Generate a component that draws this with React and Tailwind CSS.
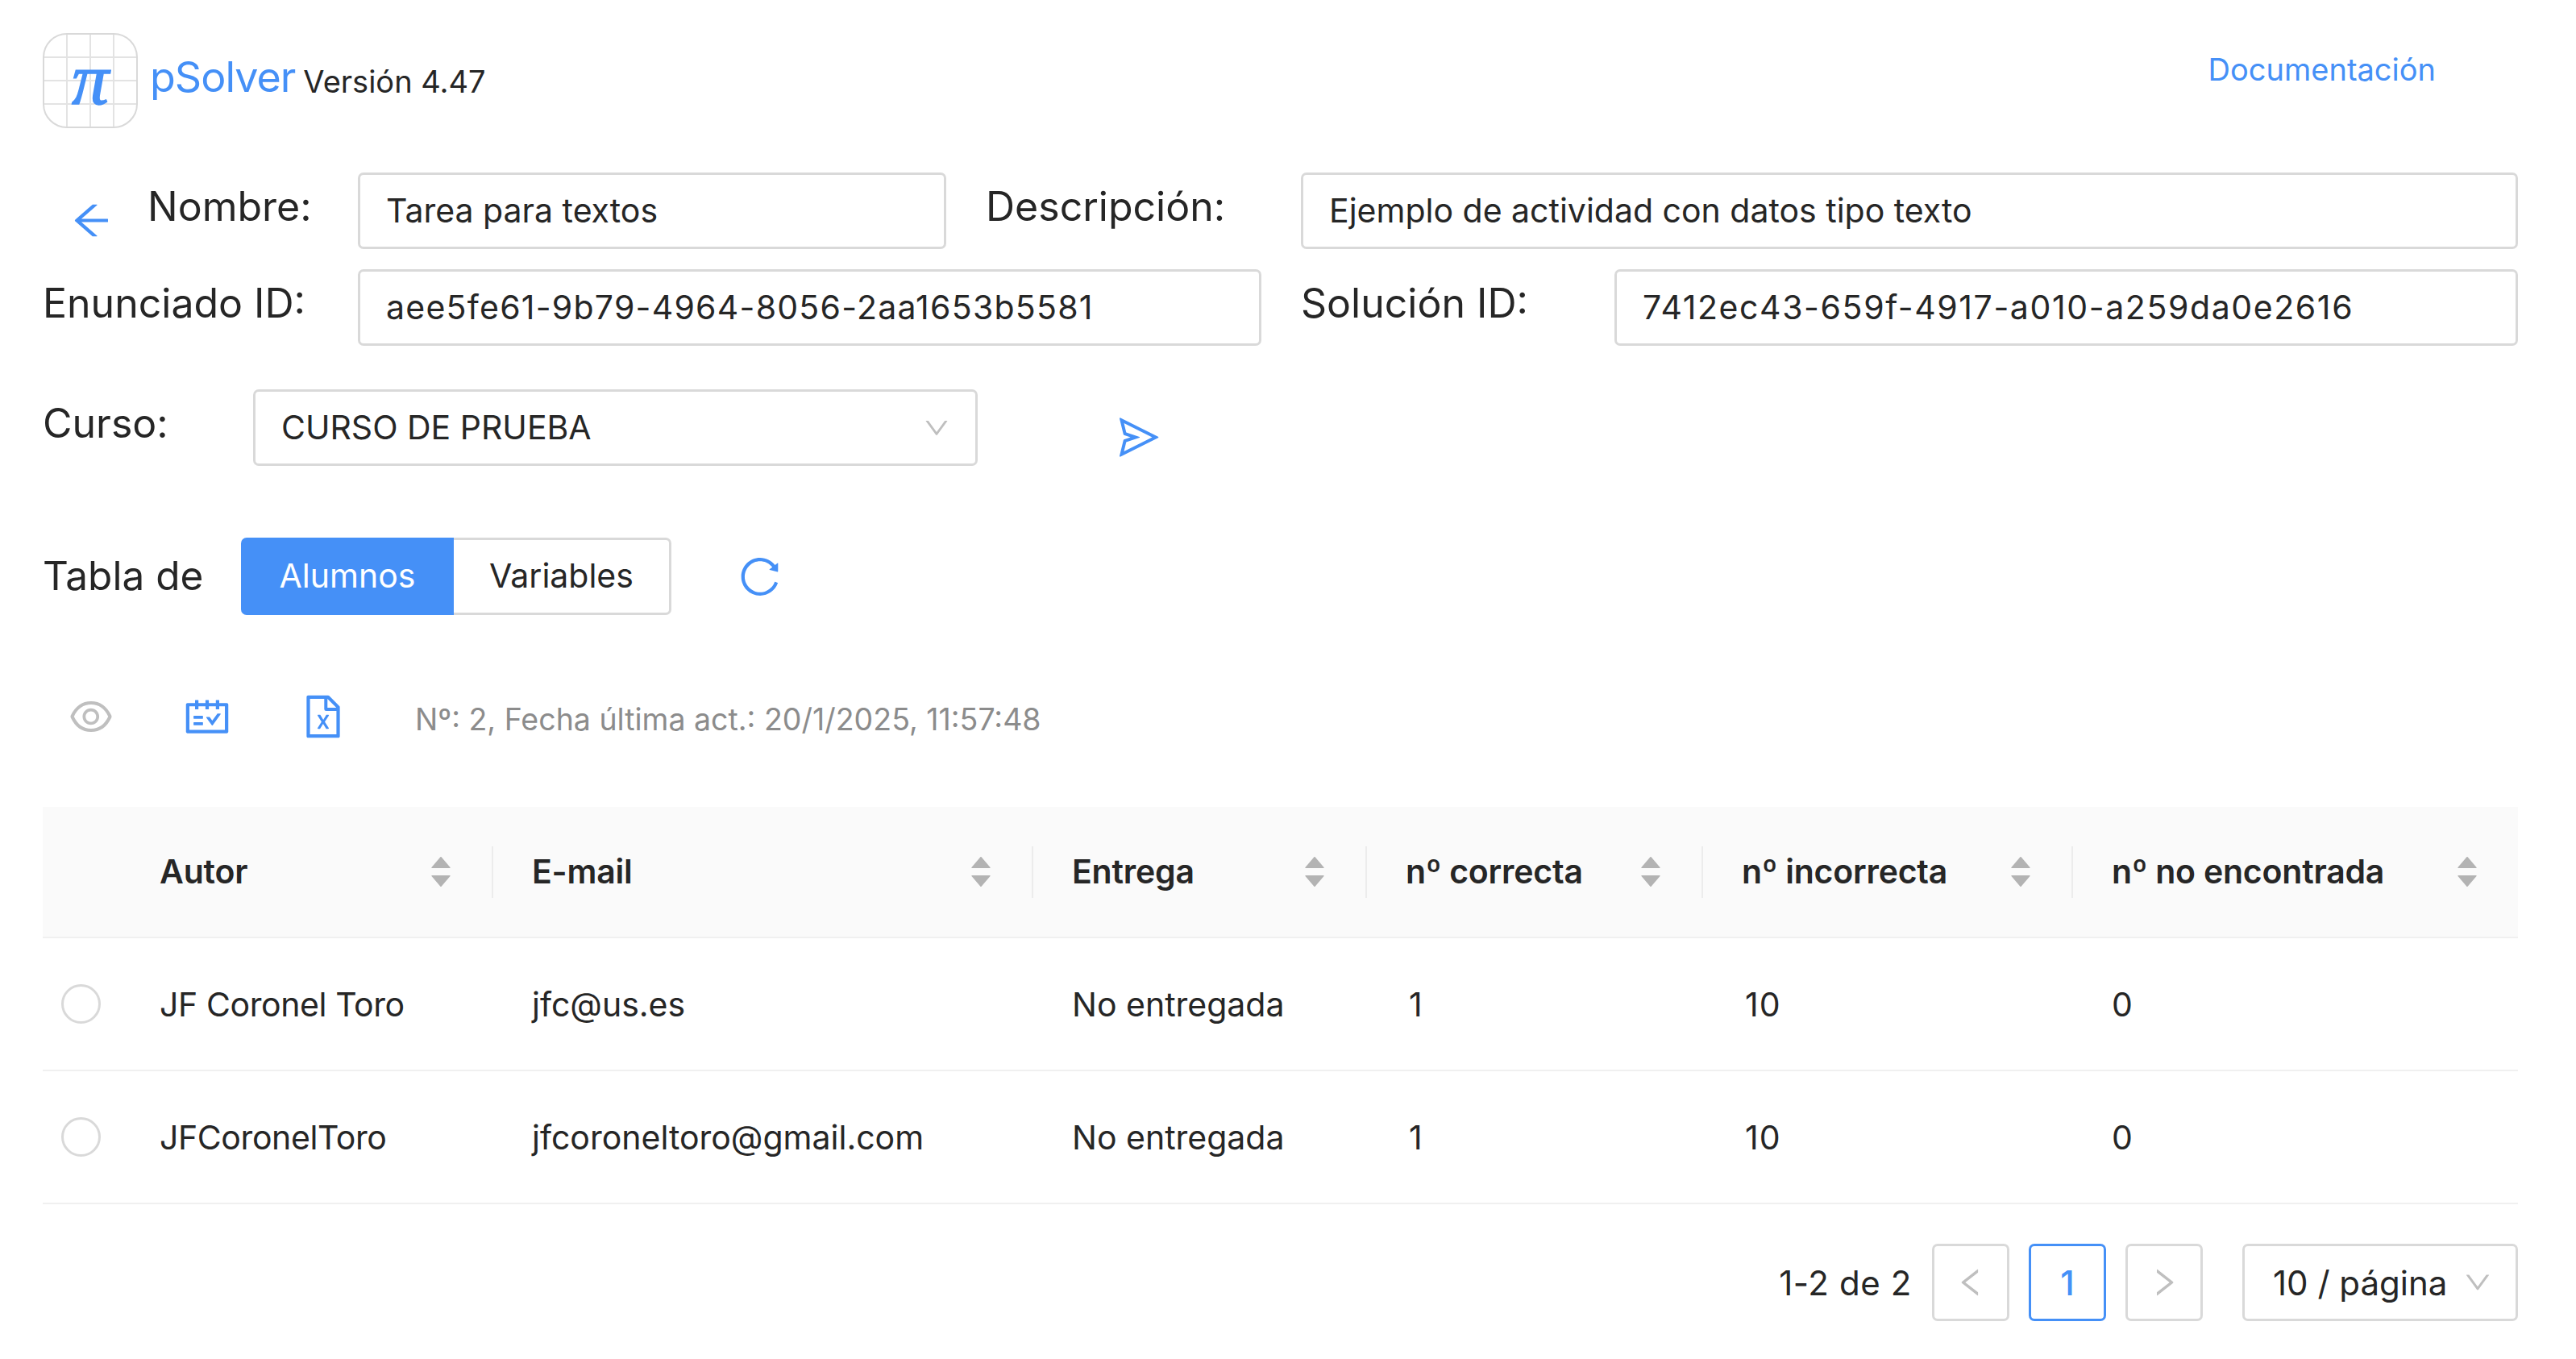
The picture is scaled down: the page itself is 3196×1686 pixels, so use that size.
import React from 'react';
import {
  AiOutlineArrowLeft,
  AiOutlineSend,
  AiOutlineReload,
  AiOutlineEye,
  AiOutlineSchedule,
  AiOutlineFileExcel,
  AiOutlineDown,
  AiOutlineLeft,
  AiOutlineRight,
  AiFillCaretUp,
  AiFillCaretDown,
} from 'react-icons/ai';

const rows = [
  { autor: 'JF Coronel Toro', email: 'jfc@us.es' },
  { autor: 'JFCoronelToro', email: 'jfcoroneltoro@gmail.com' },
];

function Logo() {
  return (
    <div className="relative w-[118px] h-[118px] shrink-0 overflow-hidden rounded-[30px] border-[2px] border-[#d9d9d9] bg-white">
      <svg className="absolute inset-0" width="114" height="114" viewBox="0 0 114 114">
        <path d="M28 0V114M57 0V114M86 0V114M0 28H114M0 57H114M0 86H114" stroke="#e3e3e3" strokeWidth="2" fill="none" />
      </svg>
      <span className="absolute left-0 right-0 top-[9px] text-center text-[92px] leading-[92px] italic font-['Liberation_Serif',serif] text-[#4590f7] [-webkit-text-stroke:1.5px_#4590f7]">π</span>
    </div>
  );
}

function Field({ className, children }) {
  return (
    <div className={`h-[95px] flex items-center px-[32px] border-[3px] border-[#d9d9d9] rounded-[7px] bg-white text-[41px] ${className}`}>
      {children}
    </div>
  );
}

function SortHeader({ label, pad, sep }) {
  return (
    <th className={`relative h-[162px] font-semibold text-left tracking-[-0.2px] ${pad}`}>
      {sep && <span className="absolute left-0 top-[49px] h-[64px] w-[2px] bg-[#ececec]" />}
      <div className="flex items-center justify-between">
        <span>{label}</span>
        <span className="flex flex-col -mr-[4px] text-[#b3b3b3] text-[34px] leading-none">
          <AiFillCaretUp className="-mb-[11px]" />
          <AiFillCaretDown />
        </span>
      </div>
    </th>
  );
}

function PageButton({ children, active }) {
  return (
    <div className={`w-[96px] h-[96px] flex items-center justify-center rounded-[7px] border-[3px] ${active ? 'border-[#4590f7] text-[#4590f7] font-medium' : 'border-[#d9d9d9] text-[#bfbfbf]'}`}>
      {children}
    </div>
  );
}

export default function App() {
  return (
    <div className="w-[3196px] h-[1686px] overflow-hidden bg-white pl-[53px] pr-[72px] pt-[41px] text-[#262626] font-['Inter','Liberation_Sans',sans-serif] text-[38px]">
      {/* cabecera */}
      <div className="flex items-center h-[118px]">
        <Logo />
        <span className="ml-[15px] -mt-[8px] text-[52px] text-[#4590f7] tracking-[-1px]">pSolver</span>
        <span className="ml-[10px] mt-[2px] text-[38px]">Versión 4.47</span>
        <a className="ml-auto mr-[102px] -mt-[28px] text-[38px] text-[#4590f7]">Documentación</a>
      </div>

      {/* nombre y descripcion */}
      <div className="flex mt-[55px]">
        <div className="w-[391px] flex items-center text-[50px] leading-none">
          <AiOutlineArrowLeft className="ml-[32px] mt-[24px] text-[57px] text-[#4590f7]" />
          <span className="ml-[41px] -mt-[12px]">Nombre:</span>
        </div>
        <Field className="w-[730px]">Tarea para textos</Field>
        <div className="ml-[49px] w-[391px] flex items-center text-[50px] leading-none">
          <span className="-mt-[12px]">Descripción:</span>
        </div>
        <Field className="flex-1">Ejemplo de actividad con datos tipo texto</Field>
      </div>

      <div className="flex mt-[25px]">
        <div className="w-[391px] flex items-center text-[50px] leading-none">
          <span className="-mt-[12px]">Enunciado ID:</span>
        </div>
        <Field className="w-[1121px] tracking-[1.25px]">aee5fe61-9b79-4964-8056-2aa1653b5581</Field>
        <div className="ml-[49px] w-[389px] flex items-center text-[50px] leading-none">
          <span className="-mt-[12px]">Solución ID:</span>
        </div>
        <Field className="flex-1 tracking-[1.6px]">7412ec43-659f-4917-a010-a259da0e2616</Field>
      </div>

      {/* curso */}
      <div className="flex mt-[54px]">
        <div className="w-[261px] flex items-center text-[50px] leading-none">
          <span className="-mt-[12px]">Curso:</span>
        </div>
        <Field className="w-[899px] justify-between pr-[30px]">
          <span>CURSO DE PRUEBA</span>
          <AiOutlineDown className="text-[36px] text-[#bfbfbf]" />
        </Field>
        <AiOutlineSend className="ml-[172px] mt-[31px] text-[57px] text-[#4590f7]" />
      </div>

      {/* tabla de */}
      <div className="flex items-center mt-[89px]">
        <span className="w-[246px] text-[49.5px] leading-none">Tabla de</span>
        <div className="flex h-[96px]">
          <div className="w-[264px] flex items-center justify-center rounded-l-[7px] bg-[#4590f7] text-white text-[41px]">Alumnos</div>
          <div className="w-[270px] flex items-center justify-center rounded-r-[7px] border-[3px] border-l-0 border-[#d9d9d9] text-[41px]">Variables</div>
        </div>
        <AiOutlineReload className="ml-[81px] text-[57px] text-[#4590f7]" />
      </div>

      {/* acciones */}
      <div className="flex items-center mt-[96px] h-[60px]">
        <AiOutlineEye className="ml-[30px] text-[60px] text-[#bfbfbf]" />
        <AiOutlineSchedule className="ml-[84px] text-[60px] text-[#4590f7]" />
        <AiOutlineFileExcel className="ml-[84px] text-[60px] text-[#4590f7]" />
        <span className="ml-[84px] mt-[8px] text-[37.5px] text-[#8c8c8c]">Nº: 2, Fecha última act.: 20/1/2025, 11:57:48</span>
      </div>

      {/* tabla */}
      <table className="w-full mt-[82px] border-collapse table-fixed text-[41px]">
        <colgroup>
          <col className="w-[145px]" />
          <col className="w-[412px]" />
          <col className="w-[670px]" />
          <col className="w-[414px]" />
          <col className="w-[417px]" />
          <col className="w-[459px]" />
          <col />
        </colgroup>
        <thead className="bg-[#fafafa]">
          <tr className="border-b-[2px] border-[#f0f0f0]">
            <th className="h-[162px]" />
            <SortHeader label="Autor" pad="pr-[50px]" />
            <SortHeader label="E-mail" pad="pl-[50px] pr-[50px]" sep />
            <SortHeader label="Entrega" pad="pl-[50px] pr-[50px]" sep />
            <SortHeader label="nº correcta" pad="pl-[50px] pr-[50px]" sep />
            <SortHeader label="nº incorrecta" pad="pl-[50px] pr-[50px]" sep />
            <SortHeader label="nº no encontrada" pad="pl-[50px] pr-[50px]" sep />
          </tr>
        </thead>
        <tbody>
          {rows.map((r) => (
            <tr key={r.email} className="h-[165px] border-b-[2px] border-[#f0f0f0]">
              <td><div className="ml-[23px] w-[49px] h-[49px] rounded-full border-[3px] border-[#d9d9d9]" /></td>
              <td className="pt-[3px] tracking-[-0.4px]">{r.autor}</td>
              <td className="pl-[50px] pt-[3px]">{r.email}</td>
              <td className="pl-[50px] pt-[3px]">No entregada</td>
              <td className="pl-[54px] pt-[3px] tracking-[1px]">1</td>
              <td className="pl-[54px] pt-[3px] tracking-[1px]">10</td>
              <td className="pl-[50px] pt-[3px]">0</td>
            </tr>
          ))}
        </tbody>
      </table>

      {/* paginacion */}
      <div className="flex items-center justify-end mt-[49px] text-[42px]">
        <span className="mr-[25px] tracking-[0.6px]">1-2 de 2</span>
        <PageButton><AiOutlineLeft className="text-[44px]" /></PageButton>
        <div className="w-[24px]" />
        <PageButton active>1</PageButton>
        <div className="w-[24px]" />
        <PageButton><AiOutlineRight className="text-[44px]" /></PageButton>
        <div className="ml-[49px] w-[342px] h-[96px] flex items-center justify-between pl-[35px] pr-[28px] rounded-[7px] border-[3px] border-[#d9d9d9]">
          <span>10 / página</span>
          <AiOutlineDown className="text-[38px] text-[#bfbfbf]" />
        </div>
      </div>
    </div>
  );
}
